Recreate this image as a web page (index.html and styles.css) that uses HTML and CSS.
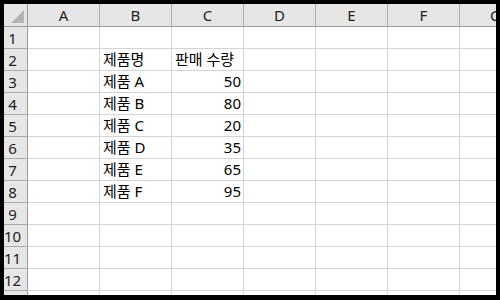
FILE: index.html
```html
<!DOCTYPE html>
<html lang="ko">
<head>
    <meta charset="UTF-8">
    <meta name="viewport" content="width=device-width, initial-scale=1.0">
    <title>판매 수량</title>
    <link rel="stylesheet" href="styles.css">
</head>
<body>
    <div class="frame">
        <div class="sheet">
            <!-- Column headers -->
            <div class="corner"></div>
            <div class="col-head">A</div>
            <div class="col-head">B</div>
            <div class="col-head">C</div>
            <div class="col-head">D</div>
            <div class="col-head">E</div>
            <div class="col-head">F</div>
            <div class="col-head">G</div>

            <div class="row-head">1</div>
            <div class="cell"></div><div class="cell"></div><div class="cell"></div><div class="cell"></div><div class="cell"></div><div class="cell"></div><div class="cell"></div>

            <div class="row-head">2</div>
            <div class="cell"></div><div class="cell">제품명</div><div class="cell">판매 수량</div><div class="cell"></div><div class="cell"></div><div class="cell"></div><div class="cell"></div>

            <div class="row-head">3</div>
            <div class="cell"></div><div class="cell">제품 A</div><div class="cell num">50</div><div class="cell"></div><div class="cell"></div><div class="cell"></div><div class="cell"></div>

            <div class="row-head">4</div>
            <div class="cell"></div><div class="cell">제품 B</div><div class="cell num">80</div><div class="cell"></div><div class="cell"></div><div class="cell"></div><div class="cell"></div>

            <div class="row-head">5</div>
            <div class="cell"></div><div class="cell">제품 C</div><div class="cell num">20</div><div class="cell"></div><div class="cell"></div><div class="cell"></div><div class="cell"></div>

            <div class="row-head">6</div>
            <div class="cell"></div><div class="cell">제품 D</div><div class="cell num">35</div><div class="cell"></div><div class="cell"></div><div class="cell"></div><div class="cell"></div>

            <div class="row-head">7</div>
            <div class="cell"></div><div class="cell">제품 E</div><div class="cell num">65</div><div class="cell"></div><div class="cell"></div><div class="cell"></div><div class="cell"></div>

            <div class="row-head">8</div>
            <div class="cell"></div><div class="cell">제품 F</div><div class="cell num">95</div><div class="cell"></div><div class="cell"></div><div class="cell"></div><div class="cell"></div>

            <div class="row-head">9</div>
            <div class="cell"></div><div class="cell"></div><div class="cell"></div><div class="cell"></div><div class="cell"></div><div class="cell"></div><div class="cell"></div>

            <div class="row-head">10</div>
            <div class="cell"></div><div class="cell"></div><div class="cell"></div><div class="cell"></div><div class="cell"></div><div class="cell"></div><div class="cell"></div>

            <div class="row-head">11</div>
            <div class="cell"></div><div class="cell"></div><div class="cell"></div><div class="cell"></div><div class="cell"></div><div class="cell"></div><div class="cell"></div>

            <div class="row-head">12</div>
            <div class="cell"></div><div class="cell"></div><div class="cell"></div><div class="cell"></div><div class="cell"></div><div class="cell"></div><div class="cell"></div>

            <!-- row 13 is only a sliver under the frame -->
            <div class="row-head"></div>
            <div class="cell"></div><div class="cell"></div><div class="cell"></div><div class="cell"></div><div class="cell"></div><div class="cell"></div><div class="cell"></div>
        </div>
    </div>
</body>
</html>
```

FILE: styles.css
```css
/* Base */
:root {
    --grid: #d4d4d4;
    --head-bg: #e6e6e6;
    --head-line: #ababab;
    --head-edge: #9b9b9b;
    --text: #000;
}

* {
    margin: 0;
    padding: 0;
    box-sizing: border-box;
}

body {
    background: #000;
    font-family: "Noto Sans", "Noto Sans CJK KR", sans-serif;
    font-size: 15px;
    color: var(--text);
    width: 500px;
    height: 300px;
    overflow: hidden;
}

/* Black frame around the sheet */
.frame {
    width: 492px;
    height: 291px;
    margin: 4px 4px 5px 4px;
    background: #fff;
    overflow: hidden;
}

/* Sheet grid */
.sheet {
    display: grid;
    grid-template-columns: 24px repeat(7, 72px);
    grid-template-rows: 23px;
    grid-auto-rows: 22px;
}

.corner,
.col-head,
.row-head {
    background: var(--head-bg);
}

.corner {
    position: relative;
    border-right: 1px solid var(--head-edge);
    border-bottom: 1px solid var(--head-edge);
}

.corner::after {
    content: '';
    position: absolute;
    right: 3px;
    bottom: 3px;
    width: 0;
    height: 0;
    border-left: 13px solid transparent;
    border-bottom: 13px solid #b4b4b4;
}

.col-head {
    display: flex;
    align-items: center;
    justify-content: center;
    border-right: 1px solid var(--head-line);
    border-bottom: 1px solid var(--head-edge);
    color: #222;
    white-space: nowrap;
    overflow: hidden;
}

.row-head {
    display: flex;
    align-items: center;
    justify-content: center;
    padding-right: 6px;
    border-right: 1px solid var(--head-edge);
    border-bottom: 1px solid var(--head-line);
    color: #222;
}

.cell {
    display: flex;
    align-items: flex-end;
    padding: 0 2px 1px 3px;
    border-right: 1px solid var(--grid);
    border-bottom: 1px solid var(--grid);
    white-space: nowrap;
    overflow: hidden;
    line-height: 20px;
}

.cell.num {
    justify-content: flex-end;
}
```
